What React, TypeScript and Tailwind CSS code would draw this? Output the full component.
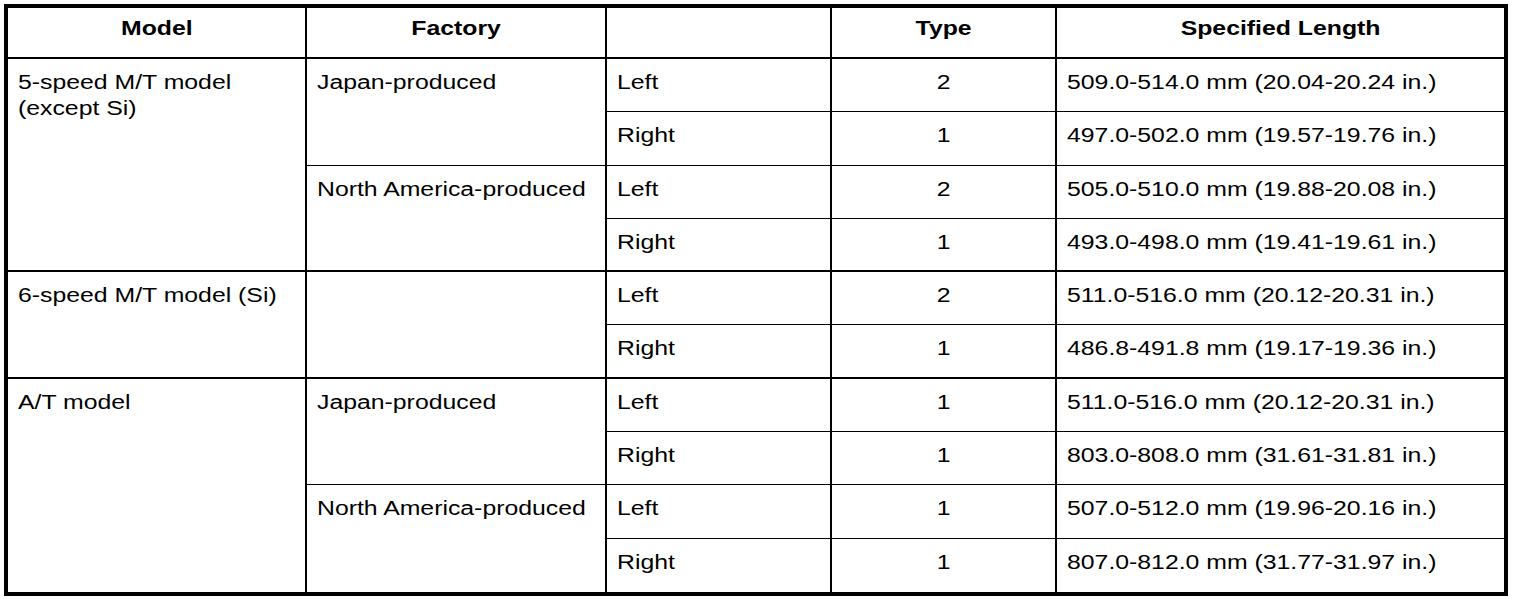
import React from 'react';

type Cell = {
  text?: React.ReactNode;
  span?: string;
  line?: string;
  center?: boolean;
  last?: boolean;
};

const head = ['Model', 'Factory', '', 'Type', 'Specified Length'];

// rows in reading order; cells with a row span are only given once
const body: Cell[] = [
  { text: <>5-speed M/T model<br />(except Si)</>, span: 'row-span-4', line: 'border-b-2' },
  { text: 'Japan-produced', span: 'row-span-2', line: 'border-b' },
  { text: 'Left', line: 'border-b' },
  { text: '2', center: true, line: 'border-b' },
  { text: '509.0-514.0 mm (20.04-20.24 in.)', line: 'border-b', last: true },
  { text: 'Right', line: 'border-b' },
  { text: '1', center: true, line: 'border-b' },
  { text: '497.0-502.0 mm (19.57-19.76 in.)', line: 'border-b', last: true },
  { text: 'North America-produced', span: 'row-span-2', line: 'border-b-2' },
  { text: 'Left', line: 'border-b' },
  { text: '2', center: true, line: 'border-b' },
  { text: '505.0-510.0 mm (19.88-20.08 in.)', line: 'border-b', last: true },
  { text: 'Right', line: 'border-b-2' },
  { text: '1', center: true, line: 'border-b-2' },
  { text: '493.0-498.0 mm (19.41-19.61 in.)', line: 'border-b-2', last: true },

  { text: '6-speed M/T model (Si)', span: 'row-span-2', line: 'border-b-2' },
  { text: '', span: 'row-span-2', line: 'border-b-2' },
  { text: 'Left', line: 'border-b' },
  { text: '2', center: true, line: 'border-b' },
  { text: '511.0-516.0 mm (20.12-20.31 in.)', line: 'border-b', last: true },
  { text: 'Right', line: 'border-b-2' },
  { text: '1', center: true, line: 'border-b-2' },
  { text: '486.8-491.8 mm (19.17-19.36 in.)', line: 'border-b-2', last: true },

  { text: 'A/T model', span: 'row-span-4' },
  { text: 'Japan-produced', span: 'row-span-2', line: 'border-b' },
  { text: 'Left', line: 'border-b' },
  { text: '1', center: true, line: 'border-b' },
  { text: '511.0-516.0 mm (20.12-20.31 in.)', line: 'border-b', last: true },
  { text: 'Right', line: 'border-b' },
  { text: '1', center: true, line: 'border-b' },
  { text: '803.0-808.0 mm (31.61-31.81 in.)', line: 'border-b', last: true },
  { text: 'North America-produced', span: 'row-span-2' },
  { text: 'Left', line: 'border-b' },
  { text: '1', center: true, line: 'border-b' },
  { text: '507.0-512.0 mm (19.96-20.16 in.)', line: 'border-b', last: true },
  { text: 'Right' },
  { text: '1', center: true },
  { text: '807.0-812.0 mm (31.77-31.97 in.)', last: true },
];

export default function App() {
  return (
    <div className="bg-white w-[1520px] h-[602px] pt-[4px] pl-[4px] text-black font-['Liberation_Sans',Arial,sans-serif] text-[20px] leading-[26px]">
      <div className="w-[1504px] h-[592px] border-4 border-black grid grid-cols-[299px_300px_225px_225px_447px] grid-rows-[51px_repeat(10,minmax(0,1fr))]">
        {head.map((h, i) => (
          <div
            key={i}
            className={`border-b-2 border-black pt-[7px] text-center font-bold ${i < 4 ? 'border-r-2' : ''}`}
          >
            <span className="inline-block scale-x-[1.24]">{h}</span>
          </div>
        ))}
        {body.map((c, i) => (
          <div
            key={i}
            className={`border-black pt-[10px] ${c.span ?? ''} ${c.line ?? ''} ${c.last ? '' : 'border-r-2'} ${
              c.center ? 'text-center' : 'pl-[10px]'
            }`}
          >
            <span className={`inline-block scale-x-[1.24] ${c.center ? '' : 'origin-left'}`}>{c.text}</span>
          </div>
        ))}
      </div>
    </div>
  );
}
